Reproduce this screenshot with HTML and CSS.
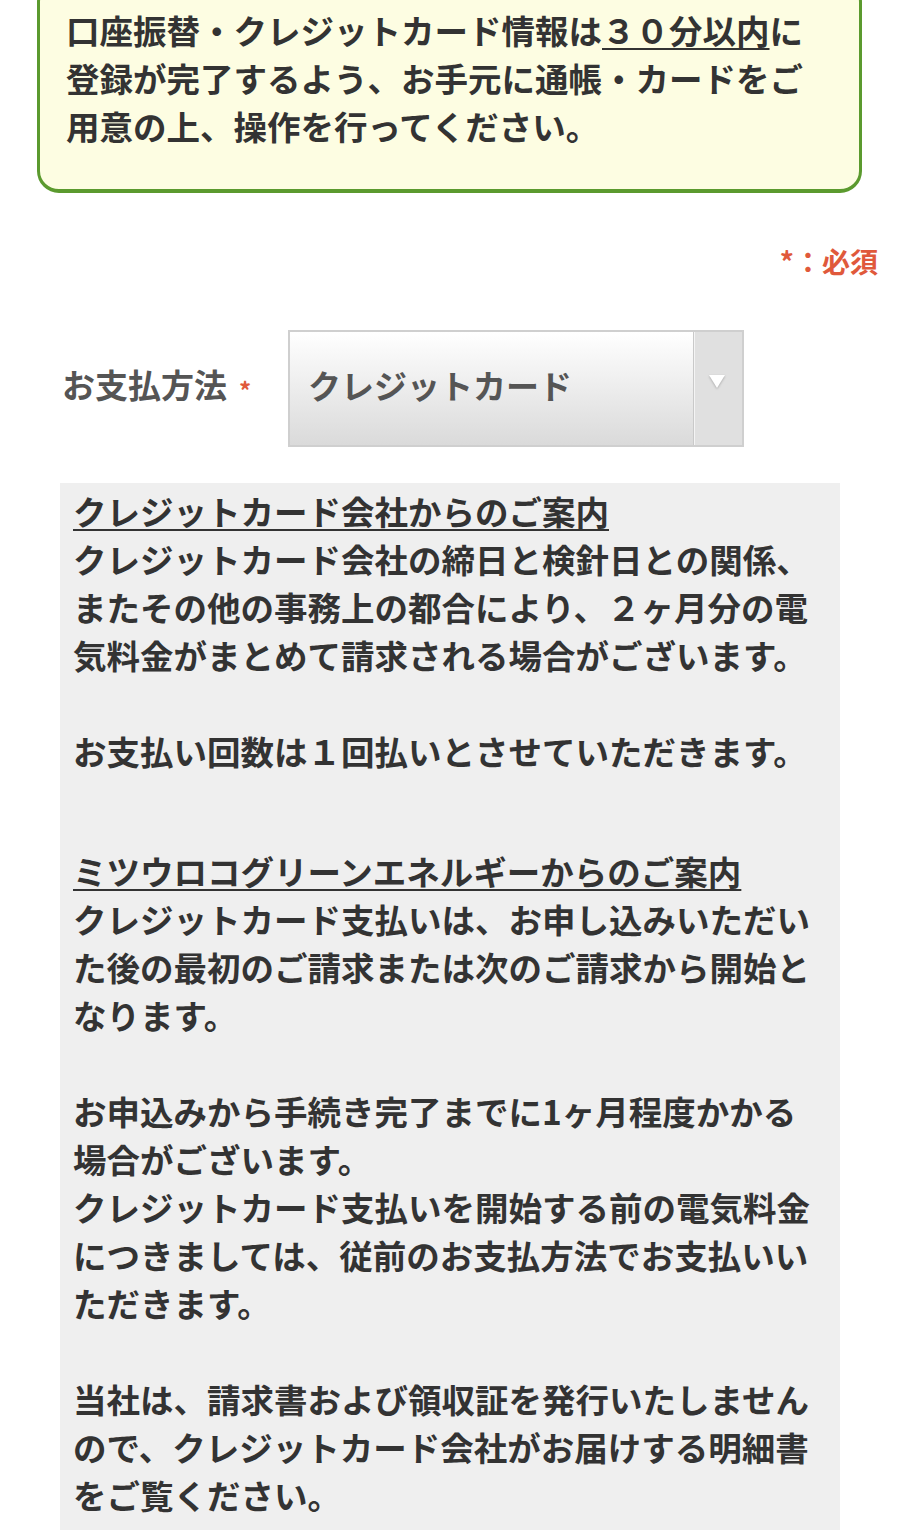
FILE: index.html
```html
<!DOCTYPE html>
<html lang="ja">
<head>
    <meta charset="UTF-8">
    <meta name="viewport" content="width=device-width, initial-scale=1.0">
    <title>お支払方法</title>
    <link rel="stylesheet" href="styles.css">
</head>
<body>
    <div class="notice">
        口座振替・クレジットカード情報は<span class="uline">３０分以内</span>に登録が完了するよう、お手元に通帳・カードをご用意の上、操作を行ってください。
    </div>

    <p class="required">*：必須</p>

    <div class="form-row">
        <label class="form-label">お支払方法<span class="mark">*</span></label>
        <div class="select-box">
            <span class="select-text">クレジットカード</span>
            <span class="select-arrow"></span>
        </div>
    </div>

    <div class="info">
        <div class="info-section">
            <p class="info-title"><span class="uline">クレジットカード会社からのご案内</span></p>
            <p>クレジットカード会社の締日と検針日との関係、またその他の事務上の都合により、２ヶ月分の電気料金がまとめて請求される場合がございます。<br><br>お支払い回数は１回払いとさせていただきます。</p>
        </div>
        <div class="info-section second">
            <p class="info-title"><span class="uline">ミツウロコグリーンエネルギーからのご案内</span></p>
            <p>クレジットカード支払いは、お申し込みいただいた後の最初のご請求または次のご請求から開始となります。<br><br>お申込みから手続き完了までに1ヶ月程度かかる場合がございます。<br>クレジットカード支払いを開始する前の電気料金につきましては、従前のお支払方法でお支払いいただきます。<br><br>当社は、請求書および領収証を発行いたしませんので、クレジットカード会社がお届けする明細書をご覧ください。</p>
        </div>
    </div>
</body>
</html>
```

FILE: styles.css
```css
/* 全体 */
body {
    margin: 0;
    font-family: "Noto Sans CJK JP", "Noto Sans", sans-serif;
    font-weight: bold;
    color: #333;
    background: #fff;
}

p {
    margin: 0;
}

.uline {
    text-decoration: underline;
    text-decoration-thickness: 2px;
    text-underline-offset: 4px;
}

/* 上部のお知らせ枠 */
.notice {
    margin: -20px 38px 0 37px;
    padding: 23px 26px 39px 26px;
    background-color: #fdfde2;
    border: 3px solid #5b9a2e;
    border-bottom-width: 4px;
    border-radius: 22px;
    font-size: 33.5px;
    line-height: 48px;
    color: #333;
}

/* 必須表示 */
.required {
    margin-top: 48px;
    padding-right: 22px;
    text-align: right;
    font-size: 28px;
    line-height: 40px;
    color: #e0593b;
}

/* 入力行 */
.form-row {
    display: flex;
    align-items: center;
    margin-top: 49px;
    padding-left: 62px;
}

.form-label {
    flex: 0 0 226px;
    padding-bottom: 9px;
    font-size: 33px;
    color: #555;
}

.form-label .mark {
    margin-left: 12px;
    font-size: 24px;
    color: #e0593b;
    vertical-align: middle;
}

.select-box {
    display: flex;
    width: 456px;
    height: 117px;
    box-sizing: border-box;
    border: 2px solid #cfcfcf;
    background: linear-gradient(#ffffff, #dadada);
}

.select-text {
    flex: 1;
    display: flex;
    align-items: center;
    padding: 0 0 7px 18px;
    font-size: 33px;
    color: #555;
}

.select-arrow {
    position: relative;
    width: 48px;
    background: #e0e0e0;
    border-left: 1px solid #c9c9c9;
    box-shadow: inset 1px 0 0 #f4f4f4;
}

/* 下向き三角 */
.select-arrow::after {
    content: "";
    position: absolute;
    left: 15px;
    top: 43px;
    border-left: 8px solid transparent;
    border-right: 8px solid transparent;
    border-top: 13px solid #fff;
    filter: drop-shadow(0 1px 1px rgba(0, 0, 0, 0.25));
}

/* ご案内 */
.info {
    margin: 36px 60px 0 60px;
    padding: 4px 22px 60px 13px;
    background-color: #efefef;
    font-size: 33.5px;
    line-height: 48px;
    color: #333;
}

.info-section.second {
    margin-top: 72px;
}
```
